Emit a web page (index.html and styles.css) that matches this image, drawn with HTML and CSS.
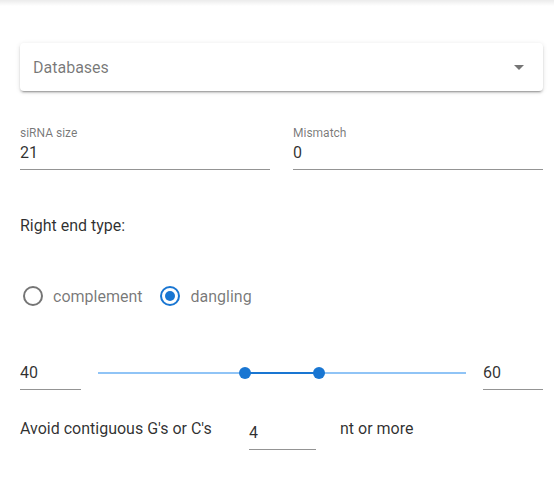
FILE: index.html
```html
<!DOCTYPE html>
<html lang="en">
<head>
<meta charset="utf-8">
<title>siRNA design</title>
<link rel="stylesheet" href="styles.css">
</head>
<body>
<div class="top-shadow"></div>
<main class="page">
  <div class="select">
    <span class="select-text">Databases</span>
    <svg class="select-arrow" viewBox="0 0 24 24" width="24" height="24"><path d="M7 10l5 5 5-5z"/></svg>
  </div>

  <div class="fields">
    <div class="field">
      <span class="field-label">siRNA size</span>
      <span class="input">21</span>
    </div>
    <div class="field">
      <span class="field-label">Mismatch</span>
      <span class="input">0</span>
    </div>
  </div>

  <p class="heading">Right end type:</p>

  <div class="radios">
    <label class="radio">
      <svg class="radio-icon" viewBox="0 0 24 24" width="24" height="24"><circle cx="12" cy="12" r="9" fill="none" stroke="currentColor" stroke-width="2"/></svg>
      <span class="radio-label">complement</span>
    </label>
    <label class="radio radio-checked">
      <svg class="radio-icon" viewBox="0 0 24 24" width="24" height="24"><circle cx="12" cy="12" r="9" fill="none" stroke="currentColor" stroke-width="2"/><circle cx="12" cy="12" r="5" fill="currentColor"/></svg>
      <span class="radio-label">dangling</span>
    </label>
  </div>

  <div class="range">
    <span class="input">40</span>
    <div class="slider">
      <div class="slider-rail"></div>
      <div class="slider-track" style="left:40%;width:20%"></div>
      <span class="slider-thumb" style="left:40%"></span>
      <span class="slider-thumb" style="left:60%"></span>
    </div>
    <span class="input">60</span>
  </div>

  <div class="gc-row">
    <span class="gc-text">Avoid contiguous G's or C's</span>
    <span class="input gc-input">4</span>
    <span class="gc-text gc-suffix">nt or more</span>
  </div>
</main>
</body>
</html>
```

FILE: styles.css
```css
* { box-sizing: border-box; }

body {
  margin: 0;
  background: #fff;
  font-family: Roboto, "Liberation Sans", Arial, sans-serif;
  font-size: 16px;
  color: rgba(0, 0, 0, 0.82);
}

.top-shadow {
  height: 6px;
  background: linear-gradient(to bottom, rgba(0, 0, 0, 0.08), rgba(0, 0, 0, 0));
}

.page {
  padding: 37px 11px 0 20px;
}

.select {
  height: 48px;
  border-radius: 4px;
  background: #fff;
  box-shadow: 0 3px 1px -2px rgba(0, 0, 0, 0.2), 0 2px 2px 0 rgba(0, 0, 0, 0.14), 0 1px 5px 0 rgba(0, 0, 0, 0.12);
  display: flex;
  align-items: center;
  justify-content: space-between;
  padding: 0 12px 0 13px;
}

.select-text {
  line-height: 19px;
  color: rgba(0, 0, 0, 0.54);
}

.select-arrow {
  display: block;
  fill: rgba(0, 0, 0, 0.54);
}

.fields {
  margin-top: 35px;
  display: grid;
  grid-template-columns: 250px 250px;
  column-gap: 23px;
}

.field {
  display: flex;
  flex-direction: column;
}

.field-label {
  font-size: 12px;
  line-height: 14px;
  color: rgba(0, 0, 0, 0.54);
  margin-bottom: 3px;
}

.input {
  display: block;
  line-height: 19px;
  padding-bottom: 7px;
  border-bottom: 1px solid rgba(0, 0, 0, 0.42);
  color: rgba(0, 0, 0, 0.82);
}

.heading {
  margin: 46px 0 0;
  line-height: 19px;
}

.radios {
  margin-top: 49px;
  display: flex;
  align-items: center;
  padding-left: 1px;
}

.radio {
  display: flex;
  align-items: center;
  margin-right: 16px;
}

.radio-icon {
  display: block;
  color: rgba(0, 0, 0, 0.54);
}

.radio-checked .radio-icon {
  color: #1976d2;
}

.radio-label {
  margin-left: 8px;
  line-height: 19px;
  color: rgba(0, 0, 0, 0.54);
}

.range {
  margin-top: 55px;
  display: grid;
  grid-template-columns: 61px 1fr 60px;
  column-gap: 17px;
  align-items: start;
}

.slider {
  position: relative;
  height: 12px;
  margin-top: 4px;
}

.slider-rail {
  position: absolute;
  left: 0;
  right: 0;
  top: 5px;
  height: 2px;
  background: #90c4f6;
}

.slider-track {
  position: absolute;
  top: 5px;
  height: 2px;
  background: #1976d2;
}

.slider-thumb {
  position: absolute;
  top: 0;
  width: 12px;
  height: 12px;
  margin-left: -6px;
  border-radius: 50%;
  background: #1976d2;
}

.gc-row {
  margin-top: 29px;
  display: grid;
  grid-template-columns: 229px 67px auto;
  align-items: start;
}

.gc-text {
  line-height: 19px;
  color: rgba(0, 0, 0, 0.82);
}

.gc-input {
  margin-top: 4px;
}

.gc-suffix {
  margin-left: 24px;
}
```
